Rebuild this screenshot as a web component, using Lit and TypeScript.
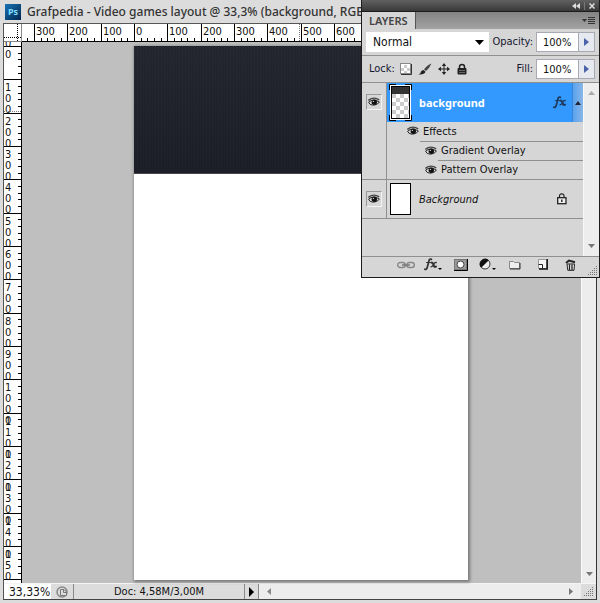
import { LitElement, html, svg, css } from "lit";
import { customElement, property } from "lit/decorators.js";

const textBase = css`
  :host {
    box-sizing: border-box;
    font-family: "DejaVu Sans Condensed", "DejaVu Sans", sans-serif;
    font-stretch: condensed;
    font-size: 11px;
    color: #111;
  }
  *,
  *::before,
  *::after {
    box-sizing: border-box;
  }
  button {
    appearance: none;
    border: 0;
    padding: 0;
    margin: 0;
    background: none;
    display: grid;
    place-items: center;
    color: inherit;
  }
  svg {
    display: block;
  }
`;

/** A pixel ruler at 33.3% zoom: 100 document pixels take a third of 100 screen pixels. */
@customElement("pixel-ruler")
export class PixelRuler extends LitElement {
  @property() direction: "across" | "down" = "across";
  @property({ type: Number }) zero = 0;
  @property({ type: Number }) cursor = 0;
  @property({ type: Number }) last = 15;

  static styles = css`
    :host {
      display: block;
      overflow: hidden;
      background: #fff;
      min-width: 0;
      min-height: 0;
      contain: size;
    }
    svg {
      display: block;
    }
    text {
      font: 11px "DejaVu Sans Condensed", "DejaVu Sans", sans-serif;
      font-stretch: condensed;
      fill: #111;
    }
    path {
      stroke: #000;
      fill: none;
    }
    .cursor {
      stroke: #777;
      stroke-dasharray: 1 1;
    }
  `;

  render() {
    const across = this.direction === "across";
    const at = (step: number) => this.zero + Math.round((step * 100) / 15);
    let lines = "";
    for (let s = across ? -16 : -5; s <= 200; s++) {
      const p = at(s) + 0.5;
      const from = s % 5 === 0 ? 0 : 14;
      lines += across ? `M${p} ${from}V18` : `M${from} ${p}H18`;
    }
    const labels = [];
    for (let n = across ? -3 : -1; n <= this.last; n++) {
      const digits = String(Math.abs(n) * 100);
      const p = at(n * 5);
      if (across) {
        labels.push(svg`<text x=${p + 2} y="11">${digits}</text>`);
      } else {
        // The fourth digit of the last label would fall below the ruler.
        const shown = n === this.last ? digits.slice(0, 3) : digits;
        [...shown].forEach((d, i) => {
          const y = p + 12 + i * 11;
          if (y > 0) labels.push(svg`<text x="1" y=${y}>${d}</text>`);
        });
      }
    }
    const c = this.cursor + 0.5;
    return html`<svg
      width=${across ? 1600 : 18}
      height=${across ? 18 : 1600}
      aria-hidden="true"
    >
      ${labels}
      <path d=${lines} />
      <path d=${across ? "M0 17.5H1600" : "M17.5 0V1600"} />
      <path class="cursor" d=${across ? `M${c} 0V17` : `M0 ${c}H17`} />
    </svg>`;
  }
}

const eye = html`<svg width="12" height="10" viewBox="0 0 12 10" aria-hidden="true">
  <path d="M.4 3.400Q5.500-.8 11.200 2.800" fill="none" stroke="#444" stroke-width="1.400" />
  <path d="M.6 5.200Q5.500.8 11.400 5.200Q7 9.600 2.200 7.400Z" fill="#ddd" stroke="#222" />
  <circle cx="6.300" cy="5.200" r="2.700" fill="#111" />
  <circle cx="5.400" cy="4.400" r=".7" fill="#ccc" />
</svg>`;

const fxMark = (color: string) => svg`
  <g fill="none" stroke=${color} stroke-linecap="round">
    <path d="M.8 11.200Q2.600 12.200 3.500 8.500L4.900 3Q5.600.4 7.400 1.300" stroke-width="1.700" />
    <path d="M2.600 4.500H6.300" stroke-width="1.200" />
    <path d="M7.400 4.700Q8.600 4.200 9.200 6L10 8Q10.600 9.400 12 8.600" stroke-width="2" />
    <path d="M12.200 4.500Q10.800 4.200 9.600 6.500T7 8.800" stroke-width="1.300" />
  </g>`;

const dots = (color: string) => svg`
  <path fill="none" stroke=${color} stroke-dasharray="1 1"
    d="M8 .5H9M6 2.500H9M4 4.500H9M2 6.500H9M0 8.500H9" />`;

@customElement("layers-panel")
export class LayersPanel extends LitElement {
  static styles = [
    textBase,
    css`
      :host {
        display: flex;
        flex-direction: column;
        background: #d6d6d6;
        border: 1px solid #1c1c1c;
        border-top: 0;
      }
      .grab {
        height: 12px;
        display: flex;
        justify-content: flex-end;
        align-items: center;
        gap: 4px;
        padding-right: 4px;
        background: linear-gradient(#616161, #393939);
        border-bottom: 1px solid #1c1c1c;
      }
      .tabs {
        height: 17px;
        display: flex;
        background: linear-gradient(#838383, #a3a3a3);
      }
      .tab {
        width: 54px;
        padding: 0 0 0 7px;
        background: #d6d6d6;
        border-right: 1px solid #555;
        font: 600 11px "Noto Sans", sans-serif;
        line-height: 18px;
        color: #444;
        margin: 0;
      }
      .menu {
        margin-left: auto;
        padding-right: 4px;
      }
      .row {
        display: flex;
        align-items: center;
        height: 27px;
        padding: 0 4px;
        border-bottom: 1px solid #8f8f8f;
      }
      .mode {
        flex: 1;
        position: relative;
        display: flex;
        align-items: center;
      }
      .mode svg {
        position: absolute;
        right: 5px;
        pointer-events: none;
      }
      select {
        appearance: none;
        width: 100%;
        height: 20px;
        border: 0;
        border-radius: 0;
        padding: 0 0 0 7px;
        background: #fff;
        font: inherit;
        font-size: 12px;
        color: #111;
      }
      .amount {
        display: flex;
        align-items: center;
        margin-left: auto;
      }
      label,
      .caption {
        padding: 0 3px 2px;
        color: #161630;
      }
      input {
        width: 42px;
        height: 20px;
        border: 1px solid #a9a9b3;
        border-right: 0;
        border-radius: 0;
        padding: 0 0 0 6px;
        background: #fff;
        font: inherit;
        color: #111;
      }
      .more {
        width: 17px;
        height: 20px;
        border: 1px solid #a9a9b3;
        background: #e6e9f0;
      }
      .locks {
        display: flex;
        align-items: center;
        gap: 6px;
        margin-left: 2px;
      }
      .list {
        display: grid;
        grid-template-columns: 1fr 16px;
        height: 174px;
        border-bottom: 1px solid #8f8f8f;
      }
      ul {
        list-style: none;
        margin: 0;
        padding: 0;
      }
      .layer {
        display: grid;
        grid-template-columns: 25px 1fr;
        border-bottom: 1px solid #8f8f8f;
      }
      .side {
        border-right: 1px solid #8f8f8f;
        padding: 11px 0 0 4px;
      }
      .eye {
        width: 16px;
        height: 16px;
        border: 1px solid #999;
        border-right-color: #f4f4f4;
        border-bottom-color: #f4f4f4;
      }
      .line {
        display: flex;
        align-items: center;
        height: 39px;
        padding-left: 2px;
      }
      .name {
        flex: 1;
        padding-left: 7px;
      }
      .on {
        background: #3399ff;
      }
      .on .name {
        font-family: "Noto Sans", sans-serif;
        font-weight: 700;
        color: #fff;
      }
      .plain .line {
        height: 38px;
      }
      .plain .name {
        font-style: italic;
      }
      .fold {
        width: 11px;
        height: 39px;
        margin-left: 6px;
        background: linear-gradient(90deg, #5aa3ee, #8ab6e6);
        border-left: 1px solid #3d83cf;
      }
      .lock {
        margin-right: 16px;
      }
      .effect {
        display: flex;
        align-items: center;
        gap: 4px;
        height: 19px;
        padding-bottom: 1px;
      }
      .first {
        padding-left: 20px;
      }
      .sub {
        margin-left: 33px;
        padding-left: 5px;
        border-top: 1px solid #8f8f8f;
      }
      .sub + .sub {
        margin-left: 51px;
        padding-left: 0;
      }
      .sub + .sub svg {
        margin-left: -13px;
      }
      .bar {
        display: flex;
        flex-direction: column;
        justify-content: space-between;
        align-items: center;
        padding: 8px 0;
        background: #ededed;
        border-left: 1px solid #f8f8f8;
      }
      footer {
        display: flex;
        align-items: center;
        height: 20px;
        padding: 0 1px 1px 0;
      }
      .tools {
        flex: 1;
        display: grid;
        grid-template-columns: repeat(7, 1fr);
        align-items: center;
        padding: 0 4px 4px 30px;
      }
      .grip {
        align-self: flex-end;
      }
    `,
  ];

  private amount(id: string, text: string) {
    return html`<div class="amount">
      <label for=${id}>${text}:</label>
      <input id=${id} value="100%" />
      <button class="more" aria-label="${text} slider">
        <svg width="5" height="8"><path d="M0 0L5 4L0 8Z" fill="#4b62a8" /></svg>
      </button>
    </div>`;
  }

  private thumb(selected: boolean) {
    return selected
      ? html`<svg width="23" height="37" aria-hidden="true">
          <defs>
            <pattern id="check" width="8" height="8" x="3" y="10" patternUnits="userSpaceOnUse">
              <rect width="8" height="8" fill="#fff" />
              <path d="M0 0H4V4H0ZM4 4H8V8H4Z" fill="#ccc" />
            </pattern>
          </defs>
          <path d="M.5 6V.5H7M16 .5H22.500V6M22.500 31V36.500H16M7 36.500H.5V31" stroke="#000" fill="none" />
          <rect x="1.500" y="1.500" width="20" height="34" fill="#fff" stroke="#fff" />
          <rect x="2.500" y="2.500" width="18" height="32" fill="url(#check)" stroke="#000" />
          <rect x="3" y="3" width="17" height="7" fill="#333" />
        </svg>`
      : html`<svg width="23" height="33" aria-hidden="true">
          <rect x="1.500" y=".5" width="20" height="31" fill="#fff" stroke="#000" />
        </svg>`;
  }

  render() {
    return html`
      <div class="grab">
        <button aria-label="Collapse">
          <svg width="8" height="6"><path d="M4 0V6L0 3ZM8 0V6L4 3Z" fill="#ddd" /></svg>
        </button>
        <svg width="1" height="8"><path d="M.5 0V8" stroke="#777" /></svg>
        <button aria-label="Close">
          <svg width="6" height="6"><path d="M.5.5L5.500 5.500M5.500.5L.5 5.500" stroke="#ddd" stroke-width="1.500" /></svg>
        </button>
      </div>
      <div class="tabs">
        <h2 class="tab">LAYERS</h2>
        <button class="menu" aria-label="Panel menu">
          <svg width="13" height="9">
            <path d="M0 3H5L2.500 6Z" fill="#333" />
            <path d="M6 1.500H13M6 3.500H13M6 5.500H13M6 7.500H13" stroke="#333" />
          </svg>
        </button>
      </div>
      <div class="row">
        <div class="mode">
          <select aria-label="Blending mode"><option>Normal</option></select>
          <svg width="9" height="5"><path d="M0 0H9L4.500 5Z" /></svg>
        </div>
        ${this.amount("opacity", "Opacity")}
      </div>
      <div class="row">
        <span class="caption" id="lock">Lock:</span>
        <div class="locks" role="group" aria-labelledby="lock">
          <button aria-label="Transparent pixels">
            <svg width="12" height="12">
              <rect x=".5" y=".5" width="10" height="10" fill="#fff" stroke="#888" />
              <path d="M1 11.500H11.500V1" stroke="#333" fill="none" />
              <path d="M4 2H7V5H4ZM7 5H10V8H7ZM1 5H4V8H1ZM4 8H7V10H4Z" fill="#ccc" />
            </svg>
          </button>
          <button aria-label="Image pixels">
            <svg width="14" height="13">
              <path d="M13.500.5Q9 2 6 6.500L8 8Q11.500 5 13.500.5Z" fill="#444" />
              <path d="M5.500 7L7.500 8.800Q6.500 12 .5 11.500Q3 10.500 3 8.500Q3.800 7 5.500 7Z" fill="#222" />
            </svg>
          </button>
          <button aria-label="Position">
            <svg width="12" height="12">
              <path d="M6 1V11M1 6H11" stroke="#222" />
              <path d="M6 0L8.200 3H3.800ZM6 12L8.200 9H3.800ZM0 6L3 3.800V8.200ZM12 6L9 3.800V8.200Z" fill="#222" />
            </svg>
          </button>
          <button aria-label="All">
            <svg width="12" height="12">
              <path d="M3.500 6V4Q3.500 1.500 6 1.500T8.500 4V6" fill="none" stroke="#222" stroke-width="1.500" />
              <rect x="1.500" y="5" width="9" height="6.500" rx="1" fill="#222" />
              <path d="M3 7.500H9M3 9.500H9" stroke="#666" />
            </svg>
          </button>
        </div>
        ${this.amount("fill", "Fill")}
      </div>
      <div class="list">
        <ul>
          <li class="layer">
            <div class="side"><button class="eye" aria-label="Visible">${eye}</button></div>
            <div>
              <div class="line on">
                ${this.thumb(true)}
                <span class="name">background</span>
                <svg width="13" height="13" aria-hidden="true">${fxMark("#1e3a5c")}</svg>
                <button class="fold" aria-label="Fold effects">
                  <svg width="6" height="4"><path d="M0 4H6L3 0Z" fill="#223" /></svg>
                </button>
              </div>
              <div class="effect first">${eye}<span>Effects</span></div>
              <div class="effect sub">${eye}<span>Gradient Overlay</span></div>
              <div class="effect sub">${eye}<span>Pattern Overlay</span></div>
            </div>
          </li>
          <li class="layer plain">
            <div class="side"><button class="eye" aria-label="Visible">${eye}</button></div>
            <div class="line">
              ${this.thumb(false)}
              <span class="name">Background</span>
              <svg class="lock" width="10" height="12" aria-hidden="true">
                <path d="M2.500 5V3Q2.500 .8 4.800 .8T7 3V5" fill="none" stroke="#222" stroke-width="1.200" />
                <rect x=".7" y="4.700" width="8.300" height="6" fill="#eee" stroke="#222" stroke-width="1.300" />
                <path d="M4.800 6.500V9" stroke="#222" stroke-width="1.400" />
              </svg>
            </div>
          </li>
        </ul>
        <div class="bar">
          <svg width="7" height="4"><path d="M0 4H7L3.500 0Z" fill="#aaa" /></svg>
          <svg width="7" height="4"><path d="M0 0H7L3.500 4Z" fill="#777" /></svg>
        </div>
      </div>
      <footer>
        <div class="tools">
          <button aria-label="Link layers">
            <svg width="18" height="8">
              <rect x=".7" y="1.500" width="7.500" height="5" rx="2.500" fill="none" stroke="#888" stroke-width="1.400" />
              <rect x="9.800" y="1.500" width="7.500" height="5" rx="2.500" fill="none" stroke="#888" stroke-width="1.400" />
              <path d="M5 4H13" stroke="#777" stroke-width="1.500" />
            </svg>
          </button>
          <button aria-label="Layer style">
            <svg width="18" height="13">${fxMark("#333")}<path d="M14 10H18L16 12Z" /></svg>
          </button>
          <button aria-label="Layer mask">
            <svg width="14" height="12">
              <rect x=".5" y=".5" width="12" height="10" fill="#999" stroke="#777" />
              <path d="M0 11.500H13.500V0" fill="none" stroke="#000" />
              <circle cx="6.500" cy="5.500" r="3.500" fill="#fff" stroke="#444" />
            </svg>
          </button>
          <button aria-label="Adjustment layer">
            <svg width="17" height="13">
              <circle cx="6" cy="6" r="5" fill="#eee" stroke="#333" />
              <path d="M2.200 9.800A5.400 5.400 0 0 1 9.800 2.200Z" fill="#111" />
              <path d="M13 10H17L15 12Z" />
            </svg>
          </button>
          <button aria-label="New group">
            <svg width="12" height="10">
              <path d="M.5 8.500V1.500H4.500L5.500 2.500H10.500V8.500Z" fill="#eee" stroke="#888" />
              <path d="M1 9H11V3" fill="none" stroke="#333" />
            </svg>
          </button>
          <button aria-label="New layer">
            <svg width="10" height="11">
              <path d="M.5.5H8.500V9.500H.5Z" fill="#f4f4f4" stroke="#999" />
              <path d="M.5 5.500H4.500V9.500" fill="#fff" stroke="#222" />
              <path d="M1 10H9.200V0" fill="none" stroke="#111" stroke-width="1.500" />
            </svg>
          </button>
          <button aria-label="Delete layer">
            <svg width="11" height="12">
              <path d="M1 4L4 1.500L10 3.200" stroke="#222" stroke-width="2" fill="none" />
              <path d="M2 5H9.500L9 11.300H2.800Z" fill="#eee" stroke="#222" />
              <path d="M4.500 5.500V11M7 5.500V11" stroke="#222" stroke-width="1.300" />
            </svg>
          </button>
        </div>
        <svg class="grip" width="10" height="10" aria-hidden="true">${dots("#777")}</svg>
      </footer>
    `;
  }
}

@customElement("app-root")
export class AppRoot extends LitElement {
  static styles = [
    textBase,
    css`
      :host {
        display: flex;
        flex-direction: column;
        position: relative;
        min-height: 100vh;
        padding: 0 3px 3px;
        background: #dcdcdc;
        overflow: hidden;
      }
      header {
        display: flex;
        align-items: center;
        gap: 5px;
        height: 23px;
        padding: 0 0 0 2px;
      }
      h1 {
        margin: 0;
        font: 500 12px "Noto Sans", sans-serif;
        color: #333;
        white-space: nowrap;
      }
      .frame {
        flex: 1;
        display: flex;
        flex-direction: column;
        border: 1px solid #555;
        border-right-color: #333;
        border-bottom-color: #444;
      }
      .work {
        flex: 1;
        display: grid;
        grid-template: 18px 1fr / 18px 1fr 15px;
        border-bottom: 1px solid #f4f4f4;
      }
      .corner {
        background: #fff;
        border-right: 1px solid #888;
        border-bottom: 1px solid #888;
      }
      .canvas {
        display: flex;
        background: #bfbfbf;
        padding: 4px 113px 3px 112px;
      }
      .page {
        flex: 1;
        background: #fff;
        box-shadow: 1px 1px 3px 1px #777;
      }
      .band {
        height: 128px;
        background:
          repeating-linear-gradient(90deg, #ffffff03 0 1px, #0000 1px 3px),
          linear-gradient(#23262f, #1b1e27);
        border-bottom: 1px solid #45454a;
      }
      .vbar {
        grid-column: 3;
        grid-row: 1 / 3;
        display: flex;
        align-items: flex-end;
        justify-content: center;
        padding-bottom: 7px;
        background: #ededed;
        border-left: 1px solid #fafafa;
      }
      .status {
        display: flex;
        height: 15px;
        align-items: stretch;
        line-height: 16px;
      }
      .zoom {
        width: 47px;
        height: 15px;
        border: 0;
        padding: 1px 0 0 5px;
        margin: 0;
        background: #fff;
        font: inherit;
        font-size: 12px;
        color: #111;
      }
      .proof {
        width: 23px;
        border-right: 1px solid #888;
      }
      .doc {
        width: 170px;
        text-align: center;
      }
      .next {
        width: 15px;
        border: solid #888;
        border-width: 0 1px;
      }
      .hbar {
        flex: 1;
        display: flex;
        align-items: center;
        justify-content: space-between;
        padding: 0 8px;
        background: #ededed;
      }
      .size {
        width: 15px;
        display: grid;
        place-items: center;
      }
      layers-panel {
        position: absolute;
        top: 0;
        right: 0;
        width: 239px;
      }
    `,
  ];

  render() {
    return html`
      <header>
        <svg width="17" height="16" role="img" aria-label="Photoshop">
          <defs>
            <linearGradient id="ps" x2="1" y2="1">
              <stop offset="0" stop-color="#1673b4" />
              <stop offset="1" stop-color="#02264f" />
            </linearGradient>
          </defs>
          <rect width="16" height="16" fill="url(#ps)" />
          <text x="3" y="11" font-size="9" font-weight="700" font-family="Noto Sans, sans-serif" fill="#7fdcfb">Ps</text>
        </svg>
        <h1>Grafpedia - Video games layout @ 33,3% (background, RGB,</h1>
      </header>
      <main class="frame">
        <div class="work">
          <div class="corner">
            <svg width="17" height="17" aria-hidden="true">
              <path d="M0 13.500H17M13.500 0V17" stroke="#000" stroke-dasharray="1 1" />
            </svg>
          </div>
          <pixel-ruler direction="across" zero="112" cursor="277" last="6"></pixel-ruler>
          <div class="vbar">
            <svg width="7" height="4"><path d="M0 0H7L3.500 4Z" fill="#777" /></svg>
          </div>
          <pixel-ruler direction="down" zero="4" cursor="69"></pixel-ruler>
          <div class="canvas">
            <div class="page"><div class="band"></div></div>
          </div>
        </div>
        <div class="status">
          <input class="zoom" value="33,33%" aria-label="Zoom" />
          <button class="proof" aria-label="Version">
            <svg width="12" height="12">
              <circle cx="6" cy="6" r="5" fill="none" stroke="#888" stroke-width="1.500" />
              <path d="M4.500 3.500H8L10.500 6V9.500H4.500Z" fill="#ddd" stroke="#777" />
              <path d="M7.500 3.500V6.500H10.500" fill="none" stroke="#777" />
            </svg>
          </button>
          <div class="doc">Doc: 4,58M/3,00M</div>
          <button class="next" aria-label="Status options">
            <svg width="5" height="10"><path d="M0 0L5 5L0 10Z" /></svg>
          </button>
          <div class="hbar">
            <svg width="4" height="7"><path d="M4 0V7L0 3.500Z" fill="#888" /></svg>
            <svg width="4" height="7"><path d="M0 0V7L4 3.500Z" fill="#777" /></svg>
          </div>
          <div class="size"><svg width="10" height="10" aria-hidden="true">${dots("#777")}</svg></div>
        </div>
      </main>
      <layers-panel></layers-panel>
    `;
  }
}
